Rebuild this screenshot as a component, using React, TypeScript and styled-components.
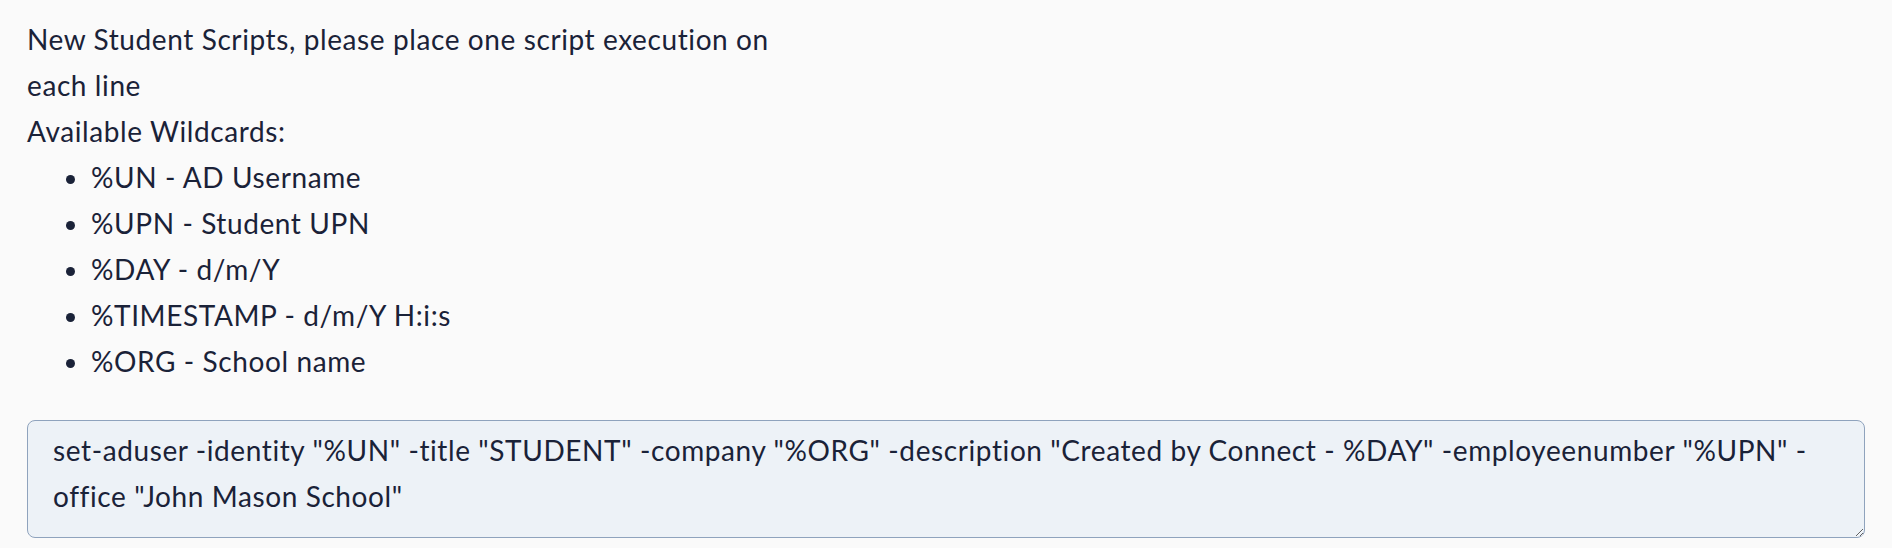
import { FC } from 'react'
import styled, { createGlobalStyle } from 'styled-components'

const GlobalStyle = createGlobalStyle`
  html, body {
    margin: 0;
    padding: 0;
    background: #fafafa;
  }
  body {
    font-family: Lato, 'Open Sans', sans-serif;
    color: #1a2238;
  }
`

const wildcards = [
  '%UN - AD Username',
  '%UPN - Student UPN',
  '%DAY - d/m/Y',
  '%TIMESTAMP - d/m/Y H:i:s',
  '%ORG - School name'
]

const defaultScript =
  'set-aduser -identity "%UN" -title "STUDENT" -company "%ORG" -description "Created by Connect - %DAY" -employeenumber "%UPN" -office "John Mason School"'

const App: FC = () => {
  return (
    <>
      <GlobalStyle />
      <Container>
        <Label htmlFor="new-student-scripts">
          <LabelText>New Student Scripts, please place one script execution on each line</LabelText>
          <LabelText>Available Wildcards:</LabelText>
          <WildcardList>
            {wildcards.map((w) => (
              <WildcardItem key={w}>{w}</WildcardItem>
            ))}
          </WildcardList>
        </Label>
        <ScriptInput id="new-student-scripts" rows={2} defaultValue={defaultScript} spellCheck />
      </Container>
    </>
  )
}

const Container = styled.div`
  display: flex;
  flex-direction: column;
  padding: 16px 27px 10px;
  font-size: 28px;
  line-height: 46px;
  letter-spacing: 0.6px;
`

const Label = styled.label`
  display: block;
`

const LabelText = styled.div`
  max-width: 770px;
`

const WildcardList = styled.ul`
  margin: 0 0 36px;
  padding-left: 64px;
  list-style: disc;
`

const WildcardItem = styled.li`
  padding-left: 0;
`

const ScriptInput = styled.textarea`
  display: block;
  width: 100%;
  box-sizing: border-box;
  padding: 6px 25px 18px;
  font-family: inherit;
  font-size: 28px;
  line-height: 46px;
  letter-spacing: 0.6px;
  color: #1a2238;
  background: #edf2f7;
  border: 1.5px solid #8fa3bd;
  border-radius: 8px;
  resize: vertical;
  outline: none;
`

export default App
